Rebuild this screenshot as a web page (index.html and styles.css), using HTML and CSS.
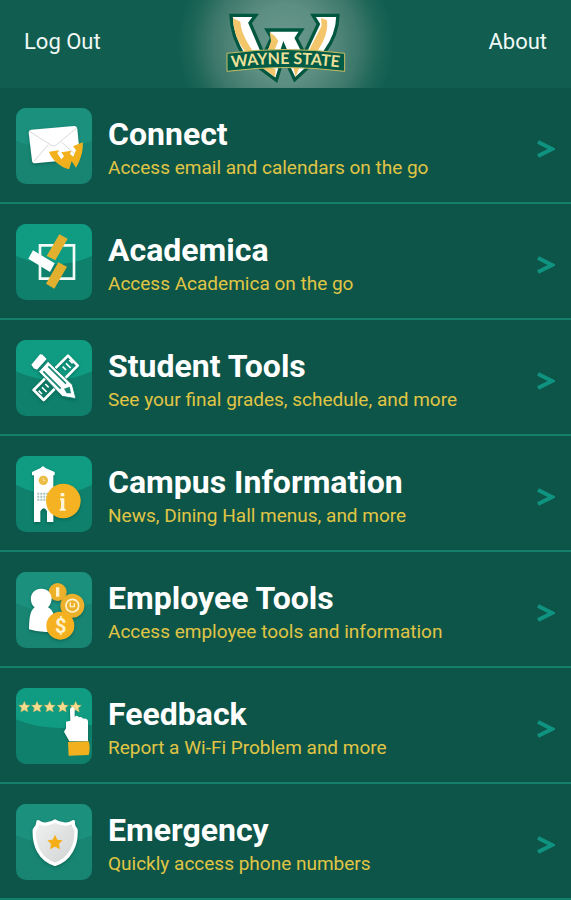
FILE: index.html
```html
<!DOCTYPE html>
<html lang="en">
<head>
<meta charset="utf-8">
<meta name="viewport" content="width=device-width, initial-scale=1">
<title>Wayne State</title>
<link rel="stylesheet" href="styles.css">
</head>
<body>
<header class="topbar">
  <button class="topbar-action" type="button">Log Out</button>
  <svg class="logo" viewBox="138 36 366 222" role="img" aria-label="Wayne State">
    <g stroke="#00573f" stroke-width="10" fill="#fff" stroke-linejoin="miter">
      <path d="M156 49H230L213 72L254 168L278 117L264 93H368L352 117L376 165L418 75L402 49H477C476 90 462 126 438 158L347 242L314 172L292 244L196 172C170 132 157 92 156 49Z"/>
    </g>
    <path fill="#f3c66b" d="M162 57L184 68C186 104 208 134 226 164H204C176 132 163 96 162 57ZM272 100L288 112L298 126L282 164L262 170L276 126ZM426 57L444 64C448 98 434 128 414 158H388L428 80ZM228 190L262 192L290 212L288 234ZM340 196L366 194L350 234Z"/>
    <path fill="#00573f" d="M313 126L330 166H300ZM296 190H336L315 170Z"/>
    <path fill="#005c47" stroke="#c9bd62" stroke-width="3" d="M144 163Q318 140 497 163V217Q318 194 144 217Z"/>
    <path id="banner-line" fill="none" d="M158 206Q318 183 494 207"/>
    <text class="logo-text"><textPath href="#banner-line">WAYNE STATE</textPath></text>
  </svg>
  <button class="topbar-action" type="button">About</button>
</header>
<main>
<nav aria-label="Main menu">
  <ul class="menu">
    <li><a class="item" href="#connect">
      <svg class="tile soft" viewBox="24 24 228 228" aria-hidden="true">
        <path class="shine" d="M24 24H252V122Q138 170 24 122Z"/>
        <path class="shade" fill="#fff" d="M69 89L198 78Q207 78 208 87L216 169Q216 177 208 178L82 190Q73 190 72 182L62 98Q62 90 69 89Z"/>
        <path fill="none" stroke="#d6dad8" stroke-width="3" d="M64 94L132 137Q140 140 146 134L206 84M78 184L121 134M212 172L160 126"/>
        <path fill="#f2b11c" d="M123 155L154 151L148 160L160 178L168 169L160 157L190 152L186 162L196 170L204 150L195 139L224 127C227 153 216 184 204 203L191 184L183 208C158 201 132 181 123 155Z"/>
      </svg>
      <span class="copy"><strong class="title">Connect</strong><span class="note">Access email and calendars on the go</span></span>
      <svg class="chevron" viewBox="0 0 18 18" aria-hidden="true"><path d="M1 2L15 9L1 16"/></svg>
    </a></li>
    <li><a class="item" href="#academica">
      <svg class="tile" viewBox="24 24 228 228" aria-hidden="true">
        <path class="shine" d="M24 24H252V120Q138 170 24 120Z"/>
        <path fill="none" stroke="#f2fbf7" stroke-width="8" d="M96 88H198V188H96Z"/>
        <path fill="#e0b02e" d="M154 55L179 68L142 133L116 120ZM151 139L177 152L139 218L114 203Z"/>
        <path fill="#fff" d="M75 103L140 142L126 168L61 128Z"/>
      </svg>
      <span class="copy"><strong class="title">Academica</strong><span class="note">Access Academica on the go</span></span>
      <svg class="chevron" viewBox="0 0 18 18" aria-hidden="true"><path d="M1 2L15 9L1 16"/></svg>
    </a></li>
    <li><a class="item" href="#student">
      <svg class="tile" viewBox="24 24 228 228" aria-hidden="true">
        <path class="shine" d="M24 24H252V118Q138 170 24 118Z"/>
        <g class="shade">
          <path fill="none" stroke="#fff" stroke-width="8" stroke-linejoin="round" d="M180 71L209 101L107 204L77 174Z"/>
          <path stroke="#fff" stroke-width="5" d="M184 84L194 94M174 94L188 108M164 104L174 114M112 156L122 166M102 166L116 180M92 176L102 186"/>
          <path fill="#fff" stroke="#178672" stroke-width="3" d="M92 119L120 88L193 158L204 200L163 193Z"/>
          <path fill="#fff" d="M70 98L96 67Q103 65 108 73L116 81L87 113L77 109Z"/>
          <path stroke="#178672" stroke-width="5" d="M106 118L158 170M121 103L174 155"/>
          <path fill="#178672" d="M168 170L185 164L189 184L176 184Z"/>
        </g>
      </svg>
      <span class="copy"><strong class="title">Student Tools</strong><span class="note">See your final grades, schedule, and more</span></span>
      <svg class="chevron" viewBox="0 0 18 18" aria-hidden="true"><path d="M1 2L15 9L1 16"/></svg>
    </a></li>
    <li><a class="item" href="#campus">
      <svg class="tile" viewBox="24 24 228 228" aria-hidden="true">
        <path class="shine" d="M24 24H252V110Q138 170 24 110Z"/>
        <g class="shade">
          <path fill="#fff" d="M72 72L98 60Q105 50 112 60L140 72V82H136V222H117V190Q108 172 97 190V222H78V82H72Z"/>
          <circle cx="106" cy="97" r="14" fill="#edbc42"/>
          <path fill="none" stroke="#fff4d6" stroke-width="2" d="M106 90V98H112"/>
          <path stroke="#a9c5be" stroke-width="6" stroke-dasharray="6 3" d="M88 137H124M88 146H124M88 155H124"/>
          <circle cx="166" cy="159" r="52" fill="#f5b323"/>
        </g>
        <path fill="#fff6d8" d="M158 135H169V145H158ZM156 151H169V182H173V188H155V182H159V157H156Z"/>
      </svg>
      <span class="copy"><strong class="title">Campus Information</strong><span class="note">News, Dining Hall menus, and more</span></span>
      <svg class="chevron" viewBox="0 0 18 18" aria-hidden="true"><path d="M1 2L15 9L1 16"/></svg>
    </a></li>
    <li><a class="item" href="#employee">
      <svg class="tile soft" viewBox="24 24 228 228" aria-hidden="true">
        <path class="shine" d="M24 24H252V118Q138 170 24 118Z"/>
        <g class="shade">
          <circle cx="149" cy="84" r="27" fill="#edb02b"/>
          <circle cx="193" cy="125" r="36" fill="#edb02b"/>
          <path fill="#fff" d="M80 130C60 114 66 74 99 74C132 74 140 110 120 130C134 138 138 150 138 166V202Q100 208 63 196C64 168 64 142 80 130Z"/>
          <circle cx="157" cy="185" r="42" fill="#f5b11f"/>
        </g>
        <path fill="#fff3cc" d="M144 70H154V98H144Z"/>
        <circle cx="193" cy="125" r="19" fill="none" stroke="#fff3cc" stroke-width="5"/>
        <path fill="none" stroke="#fff3cc" stroke-width="4" d="M187 115V128H199V118"/>
        <text class="coin" x="158" y="206">$</text>
      </svg>
      <span class="copy"><strong class="title">Employee Tools</strong><span class="note">Access employee tools and information</span></span>
      <svg class="chevron" viewBox="0 0 18 18" aria-hidden="true"><path d="M1 2L15 9L1 16"/></svg>
    </a></li>
    <li><a class="item" href="#feedback">
      <svg class="tile" viewBox="24 24 228 228" aria-hidden="true">
        <path class="shine" d="M24 24H252V134Q120 160 24 118Z"/>
        <defs><path id="star" d="M0 -17L5 -6L17 -5L8 3L11 15L0 9L-11 15L-8 3L-17 -5L-5 -6Z"/></defs>
        <g class="stars"><use href="#star" x="49" y="81"/><use href="#star" x="87" y="81"/><use href="#star" x="125" y="81"/><use href="#star" x="164" y="81"/><use href="#star" x="203" y="81"/></g>
        <path class="shade" fill="#fff" d="M186 89Q187 80 194 81Q200 82 200 90V110Q208 104 213 112Q220 109 226 116Q238 114 240 124V184H184L168 155L174 145V125L187 122Z"/>
        <path fill="#f2b01e" d="M180 186L242 184Q248 205 242 225L182 227Z"/>
      </svg>
      <span class="copy"><strong class="title">Feedback</strong><span class="note">Report a Wi-Fi Problem and more</span></span>
      <svg class="chevron" viewBox="0 0 18 18" aria-hidden="true"><path d="M1 2L15 9L1 16"/></svg>
    </a></li>
    <li><a class="item" href="#emergency">
      <svg class="tile soft" viewBox="24 24 228 228" aria-hidden="true">
        <defs><linearGradient id="silver" x1="0" y1="0" x2="1" y2="1"><stop offset="0" stop-color="#f1f1f1"/><stop offset="1" stop-color="#cfd3d2"/></linearGradient></defs>
        <path class="shine" d="M24 24H252V118Q138 170 24 118Z"/>
        <path class="shade" fill="url(#silver)" stroke="#fff" stroke-width="10" stroke-linejoin="round" d="M90 77Q107 89 122 82Q133 81 141 75Q149 81 160 82Q177 89 196 77Q194 90 204 101C207 146 186 191 141 205C97 191 76 150 79 101Q90 91 90 77Z"/>
        <path fill="#f5ae18" d="M141 116L148 131L164 133L153 144L156 160L141 152L126 160L129 144L118 133L134 131Z"/>
      </svg>
      <span class="copy"><strong class="title">Emergency</strong><span class="note">Quickly access phone numbers</span></span>
      <svg class="chevron" viewBox="0 0 18 18" aria-hidden="true"><path d="M1 2L15 9L1 16"/></svg>
    </a></li>
  </ul>
</nav>
</main>
</body>
</html>
```
FILE: styles.css
```css
* { box-sizing: border-box; }

body {
  margin: 0;
  background: #0d5548;
  color: #fff;
  font-family: Roboto, "Liberation Sans", sans-serif;
}

.topbar {
  display: grid;
  grid-template-columns: 1fr auto 1fr;
  align-items: center;
  height: 88px;
  padding: 8px 24px 0;
  background: radial-gradient(circle at 50% 50%, #6a998c 0, #5c8e81 40px, #3d786b 72px, #1c6557 94px, #115e51 108px);
}

.topbar-action {
  justify-self: start;
  margin: 0 0 12px;
  padding: 0;
  border: 0;
  background: none;
  color: #f0f8f5;
  font: 22px/26px Roboto, "Liberation Sans", sans-serif;
  cursor: pointer;
}

.topbar-action:last-child { justify-self: end; }

.logo {
  display: block;
  width: 122px;
  height: 74px;
}

.logo-text {
  fill: #eee09a;
  font: 700 48px Lato, sans-serif;
}

.menu {
  margin: 0;
  padding: 0;
  list-style: none;
}

.item {
  display: flex;
  align-items: center;
  gap: 16px;
  height: 116px;
  padding: 2px 16px 0;
  border-bottom: 2px solid #14806c;
  color: inherit;
  text-decoration: none;
}

.tile {
  flex: none;
  width: 76px;
  height: 76px;
  border-radius: 10px;
  background: #0e806b;
}

.shine { fill: #109c83; }

.soft { background: #178572; }

.soft .shine { fill: #1b907d; }

.shade { filter: drop-shadow(0 4px 4px #064c4088); }

.stars {
  fill: #f5dc8e;
  stroke: #c9a84c;
  stroke-width: 1;
}

.coin {
  fill: #fff3cc;
  font: 700 60px Roboto, sans-serif;
  text-anchor: middle;
}

.copy {
  display: flex;
  flex: 1;
  flex-direction: column;
  padding-top: 6px;
}

.title {
  font-size: 32px;
  font-weight: 700;
  line-height: 38px;
}

.note {
  color: #e0c545;
  font-size: 19px;
  line-height: 30px;
}

.chevron {
  flex: none;
  width: 18px;
  height: 18px;
  margin-top: 6px;
  fill: none;
  stroke: #0f9380;
  stroke-width: 4;
}
```
